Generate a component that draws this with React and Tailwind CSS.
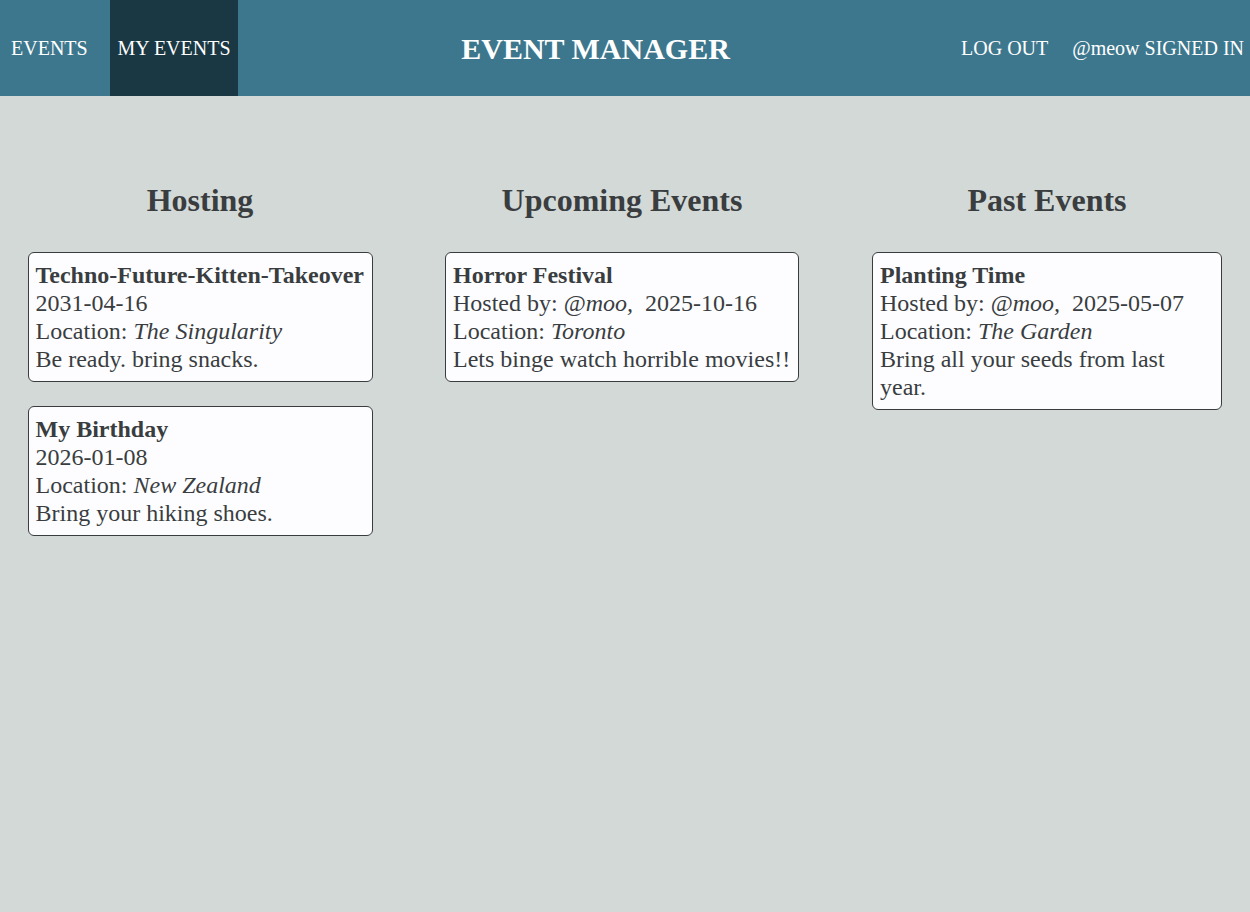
const hosting = [
  {
    id: 1,
    title: 'Techno-Future-Kitten-Takeover',
    date: '2031-04-16',
    location: 'The Singularity',
    description: 'Be ready. bring snacks.',
  },
  {
    id: 2,
    title: 'My Birthday',
    date: '2026-01-08',
    location: 'New Zealand',
    description: 'Bring your hiking shoes.',
  },
];

const upcoming = [
  {
    id: 3,
    title: 'Horror Festival',
    host: 'moo',
    date: '2025-10-16',
    location: 'Toronto',
    description: 'Lets binge watch horrible movies!!',
  },
];

const past = [
  {
    id: 4,
    title: 'Planting Time',
    host: 'moo',
    date: '2025-05-07',
    location: 'The Garden',
    description: 'Bring all your seeds from last year.',
  },
];

const EventCard = ({ event, width }) => (
  <div
    className={`${width} bg-[#fdfdff] border border-[#3a3d3f] rounded-[6px] px-[7px] py-[8px] text-[24px] leading-[28px] text-[#3a3d3f]`}
  >
    <div className="font-bold">{event.title}</div>
    {event.host ? (
      <div>
        Hosted by: @<i>{event.host},</i>&nbsp; {event.date}
      </div>
    ) : (
      <div>{event.date}</div>
    )}
    <div>
      Location: <i>{event.location}</i>
    </div>
    <div>{event.description}</div>
  </div>
);

const Column = ({ title, events, width }) => (
  <div className="flex flex-col items-center">
    <h1 className="text-[32px] font-bold text-[#3a3d3f] leading-[37px] mb-[33px]">{title}</h1>
    <div className="flex flex-col items-center gap-[24px]">
      {events.map((e) => (
        <EventCard key={e.id} event={e} width={width} />
      ))}
    </div>
  </div>
);

const App = () => {
  return (
    <div
      className="min-h-screen bg-[#d3d9d7]"
      style={{ fontFamily: '"Liberation Serif", "Times New Roman", serif' }}
    >
      {/* Nav */}
      <nav className="h-24 bg-[#3d778d] text-white flex items-stretch justify-between text-[20px]">
        <div className="flex items-stretch">
          <a className="w-[110px] pl-[11px] flex items-center">EVENTS</a>
          <a className="w-[128px] bg-[#1a3844] flex items-center justify-center">MY EVENTS</a>
        </div>
        <div className="flex items-center text-[30px] font-bold pr-[8px]">EVENT MANAGER</div>
        <div className="flex items-center gap-6 pr-[6px]">
          <a>LOG OUT</a>
          <span>@meow SIGNED IN</span>
        </div>
      </nav>

      {/* Columns */}
      <div className="grid grid-cols-[400px_444px_406px] pt-[86px]">
        <Column title="Hosting" events={hosting} width="w-[345px]" />
        <Column title="Upcoming Events" events={upcoming} width="w-[354px]" />
        <Column title="Past Events" events={past} width="w-[350px]" />
      </div>
    </div>
  );
};

export default App;
